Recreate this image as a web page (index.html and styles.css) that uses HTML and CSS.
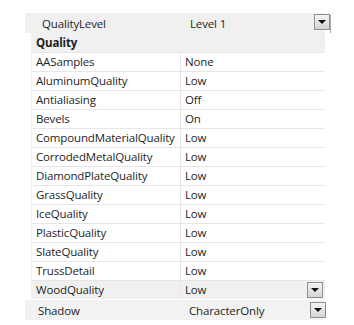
FILE: index.html
```html
<!DOCTYPE html>
<html lang="en">
<head>
<meta charset="UTF-8">
<title>Quality Settings</title>
<link rel="stylesheet" href="styles.css">
</head>
<body>
<div class="panel">
	<div class="topRow">
		<div class="topName">QualityLevel</div>
		<div class="topValue">Level 1</div>
		<div class="dropBtn topBtn"><span class="arrow"></span></div>
		<div class="edgeLine"></div>
	</div>
	<div class="grid">
		<div class="category">Quality</div>
		<div class="row"><div class="name">AASamples</div><div class="value">None</div></div>
		<div class="row"><div class="name">AluminumQuality</div><div class="value">Low</div></div>
		<div class="row"><div class="name">Antialiasing</div><div class="value">Off</div></div>
		<div class="row"><div class="name">Bevels</div><div class="value">On</div></div>
		<div class="row"><div class="name">CompoundMaterialQuality</div><div class="value">Low</div></div>
		<div class="row"><div class="name">CorrodedMetalQuality</div><div class="value">Low</div></div>
		<div class="row"><div class="name">DiamondPlateQuality</div><div class="value">Low</div></div>
		<div class="row"><div class="name">GrassQuality</div><div class="value">Low</div></div>
		<div class="row"><div class="name">IceQuality</div><div class="value">Low</div></div>
		<div class="row"><div class="name">PlasticQuality</div><div class="value">Low</div></div>
		<div class="row"><div class="name">SlateQuality</div><div class="value">Low</div></div>
		<div class="row"><div class="name">TrussDetail</div><div class="value">Low</div></div>
		<div class="row selected"><div class="name">WoodQuality</div><div class="value">Low<div class="dropBtn"><span class="arrow"></span></div></div></div>
	</div>
	<div class="bottomRow">
		<div class="bottomName">Shadow</div>
		<div class="bottomValue">CharacterOnly</div>
		<div class="dropBtn bottomBtn"><span class="arrow"></span></div>
	</div>
</div>
</body>
</html>
```

FILE: styles.css
```css
html, body {
	margin: 0;
	padding: 0;
	background: #ffffff;
	font-family: "Open Sans", "Noto Sans", sans-serif;
	font-size: 11.5px;
	letter-spacing: -0.15px;
	color: #1e1e1e;
}
.panel {
	width: 306px;
	margin: 13px 0 0 25px;
}
.topRow {
	display: flex;
	align-items: center;
	height: 20px;
	width: 299px;
	background: #f0f0f0;
	position: relative;
}
.topName {
	width: 148px;
	padding-left: 17px;
}
.topValue {
	flex: 1;
}
.topBtn {
	position: absolute;
	left: 289px;
	top: 1px;
}
.edgeLine {
	position: absolute;
	left: 305px;
	top: 2px;
	width: 1px;
	height: 18px;
	background: #a8a8a8;
}
.grid {
	margin-left: 6px;
	width: 293px;
	border-left: 1px solid #f2f2f2;
}
.category {
	height: 19px;
	line-height: 19px;
	padding-left: 4px;
	font-weight: bold;
	background: #f0f0f0;
}
.row {
	display: flex;
	height: 18px;
	line-height: 18px;
	border-top: 1px solid #e6e6e6;
}
.row .name {
	width: 144px;
	padding-left: 4px;
	border-right: 1px solid #e6e6e6;
	white-space: nowrap;
	overflow: hidden;
}
.row .value {
	flex: 1;
	padding-left: 4px;
	display: flex;
	justify-content: space-between;
	align-items: center;
}
.row.selected {
	background: #f0f0f0;
}
.row.selected .dropBtn {
	margin-right: 2px;
}
.bottomRow {
	display: flex;
	align-items: center;
	height: 20px;
	margin-top: 1px;
	width: 299px;
	background: #f2f2f2;
	position: relative;
}
.bottomName {
	width: 151px;
	padding-left: 13px;
}
.bottomValue {
	flex: 1;
}
.bottomBtn {
	position: absolute;
	left: 285px;
	top: 2px;
}
.dropBtn {
	box-sizing: border-box;
	width: 16px;
	height: 16px;
	border: 1px solid #8f8f8f;
	background: linear-gradient(#f4f4f4, #d4d4d4);
	display: flex;
	align-items: center;
	justify-content: center;
}
.arrow {
	width: 0;
	height: 0;
	border-left: 4px solid transparent;
	border-right: 4px solid transparent;
	border-top: 4px solid #111111;
}
```
